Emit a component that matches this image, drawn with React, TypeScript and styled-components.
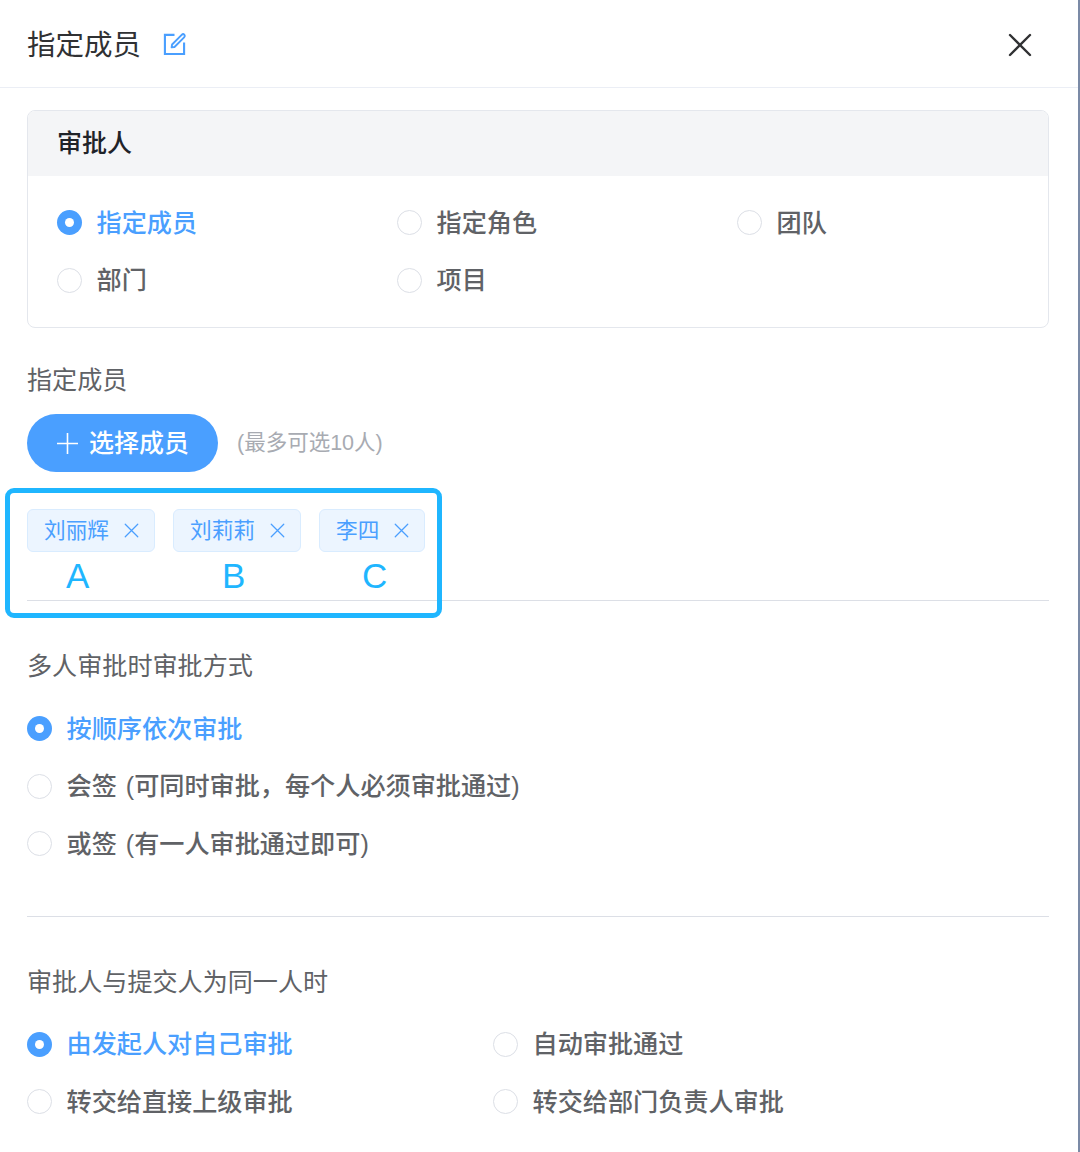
import React from "react";
import styled, { createGlobalStyle } from "styled-components";

const Global = createGlobalStyle`
  html, body { margin: 0; padding: 0; background: #fff; }
  body { font-family: "Liberation Sans", "Noto Sans CJK SC", sans-serif; }
  * { box-sizing: border-box; }
`;

const Page = styled.div`
  position: relative;
  width: 1080px;
  height: 1152px;
  overflow: hidden;
  background: #fff;
  border-right: 2px solid #7b8aa6;
`;

const Header = styled.header`
  height: 88px;
  display: flex;
  align-items: center;
  padding: 0 46px 0 27px;
  border-bottom: 1px solid #ebeef5;
`;

const Title = styled.h1`
  margin: 0;
  font-size: 28.5px;
  line-height: 40px;
  padding-top: 2px;
  font-weight: 400;
  color: #303133;
`;

const EditIcon = styled.svg`
  width: 23px;
  height: 23px;
  margin-left: 22px;
  color: #4a9fff;
`;

const CloseIcon = styled.svg`
  width: 24px;
  height: 24px;
  margin-left: auto;
  margin-top: 2px;
  color: #303133;
`;

const Body = styled.main`
  padding: 22px 29px 0 27px;
`;

const Card = styled.section`
  height: 218px;
  border: 1px solid #e4e7ed;
  border-radius: 8px;
  overflow: hidden;
`;

const CardHead = styled.div`
  height: 65px;
  display: flex;
  align-items: center;
  padding: 0 0 5px 29px;
  background: #f4f5f7;
  font-size: 25px;
  font-weight: 500;
  color: #1f2329;
`;

const CardBody = styled.div`
  padding: 18px 29px 0;
`;

const RadioGrid = styled.div<{ $col: number; $count: number; $top?: number }>`
  display: grid;
  grid-template-columns: repeat(${(p) => p.$count}, ${(p) => p.$col}px);
  grid-auto-rows: 57.5px;
  margin-top: ${(p) => p.$top ?? 0}px;
`;

const RadioStack = styled.div`
  display: grid;
  grid-auto-rows: 57.5px;
  margin-top: 18px;
`;

const RadioRow = styled.label`
  display: flex;
  align-items: center;
  gap: 14.5px;
`;

const Dot = styled.span<{ $on?: boolean }>`
  flex: none;
  width: 25px;
  height: 25px;
  border-radius: 50%;
  background: ${(p) => (p.$on ? "#4a9fff" : "#fff")};
  border: ${(p) => (p.$on ? "none" : "1px solid #dcdfe6")};
  display: flex;
  align-items: center;
  justify-content: center;
  &::after {
    content: "";
    display: ${(p) => (p.$on ? "block" : "none")};
    width: 9px;
    height: 9px;
    border-radius: 50%;
    background: #fff;
  }
`;

const RadioText = styled.span<{ $on?: boolean }>`
  font-size: 25.15px;
  line-height: 34px;
  word-spacing: 2px;
  font-weight: 500;
  color: ${(p) => (p.$on ? "#4a9fff" : "#606266")};
  white-space: nowrap;
`;

const Label = styled.div<{ $top: number }>`
  margin-top: ${(p) => p.$top}px;
  height: 34px;
  padding-top: 2px;
  font-size: 25.1px;
  line-height: 32px;
  color: #606266;
`;

const PickRow = styled.div`
  display: flex;
  align-items: center;
  margin-top: 18px;
  gap: 19px;
`;

const PickButton = styled.button`
  width: 191px;
  height: 58px;
  border: none;
  border-radius: 29px;
  background: #4a9fff;
  color: #fff;
  font: 500 25px "Liberation Sans", "Noto Sans CJK SC", sans-serif;
  display: flex;
  align-items: center;
  padding: 0 0 0 30px;
  gap: 11px;
`;

const PickLabel = styled.span`
  padding-bottom: 4px;
`;

const Hint = styled.span`
  padding-bottom: 6px;
  font-size: 21.5px;
  color: #a8abb2;
`;

const Tags = styled.div`
  display: flex;
  gap: 18px;
  margin-top: 37px;
`;

const Tag = styled.span`
  height: 43px;
  display: flex;
  align-items: center;
  padding: 0 15px 0 16px;
  gap: 15px;
  background: #ecf5ff;
  border: 1px solid #d9ecff;
  border-radius: 6px;
  color: #4a9fff;
  font-size: 21.67px;
`;

const TagName = styled.span`
  padding-bottom: 4px;
`;

const TagX = styled.svg`
  width: 15px;
  height: 15px;
  color: #4a9fff;
`;

const Divider = styled.hr<{ $top: number }>`
  margin: ${(p) => p.$top}px 0 0;
  border: none;
  border-top: 1px solid #dcdfe6;
`;

const Annotation = styled.div`
  position: absolute;
  left: 5px;
  top: 488px;
  width: 437px;
  height: 130px;
  border: 5.5px solid #1fb6ff;
  border-radius: 9px;
  pointer-events: none;
`;

const Letter = styled.span<{ $x: number }>`
  position: absolute;
  left: ${(p) => p.$x}px;
  top: 61px;
  font-size: 35px;
  line-height: 44px;
  color: #1fb6ff;
`;

const Option = ({ on, children }: { on?: boolean; children: React.ReactNode }) => (
  <RadioRow>
    <Dot $on={on} />
    <RadioText $on={on}>{children}</RadioText>
  </RadioRow>
);

const XGlyph = ({ w }: { w: number }) => (
  <path d="M2 2L22 22M22 2L2 22" fill="none" stroke="currentColor" strokeWidth={w} strokeLinecap="round" />
);

const TagItem = ({ children }: { children: React.ReactNode }) => (
  <Tag>
    <TagName>{children}</TagName>
    <TagX viewBox="0 0 24 24"><XGlyph w={2} /></TagX>
  </Tag>
);

export default function App() {
  return (
    <Page>
      <Global />
      <Header>
        <Title>指定成员</Title>
        <EditIcon viewBox="0 0 24 24" fill="none" stroke="currentColor" strokeWidth="2.2">
          <path d="M12 3H2v20h20V11" />
          <path d="M9.5 13L19.5 3c.9-.9 2-.9 2.7-.2s.7 1.9-.2 2.8L12 15.6l-3 .4z" strokeWidth="2" strokeLinejoin="round" />
        </EditIcon>
        <CloseIcon viewBox="0 0 24 24"><XGlyph w={2.4} /></CloseIcon>
      </Header>
      <Body>
        <Card>
          <CardHead>审批人</CardHead>
          <CardBody>
            <RadioGrid $col={340} $count={3}>
              <Option on>指定成员</Option>
              <Option>指定角色</Option>
              <Option>团队</Option>
              <Option>部门</Option>
              <Option>项目</Option>
            </RadioGrid>
          </CardBody>
        </Card>
        <Label $top={34}>指定成员</Label>
        <PickRow>
          <PickButton>
            <svg width="21" height="21" viewBox="0 0 21 21" stroke="currentColor" strokeWidth="1.6">
              <path d="M10.5 0v21M0 10.5h21" />
            </svg>
            <PickLabel>选择成员</PickLabel>
          </PickButton>
          <Hint>(最多可选10人)</Hint>
        </PickRow>
        <Tags>
          <TagItem>刘丽辉</TagItem>
          <TagItem>刘莉莉</TagItem>
          <TagItem>李四</TagItem>
        </Tags>
        <Divider $top={48} />
        <Label $top={47}>多人审批时审批方式</Label>
        <RadioStack>
          <Option on>按顺序依次审批</Option>
          <Option>会签 (可同时审批，每个人必须审批通过)</Option>
          <Option>或签 (有一人审批通过即可)</Option>
        </RadioStack>
        <Divider $top={43} />
        <Label $top={47}>审批人与提交人为同一人时</Label>
        <RadioGrid $col={466} $count={2} $top={18}>
          <Option on>由发起人对自己审批</Option>
          <Option>自动审批通过</Option>
          <Option>转交给直接上级审批</Option>
          <Option>转交给部门负责人审批</Option>
        </RadioGrid>
      </Body>
      <Annotation>
        <Letter $x={56}>A</Letter>
        <Letter $x={212}>B</Letter>
        <Letter $x={352}>C</Letter>
      </Annotation>
    </Page>
  );
}
